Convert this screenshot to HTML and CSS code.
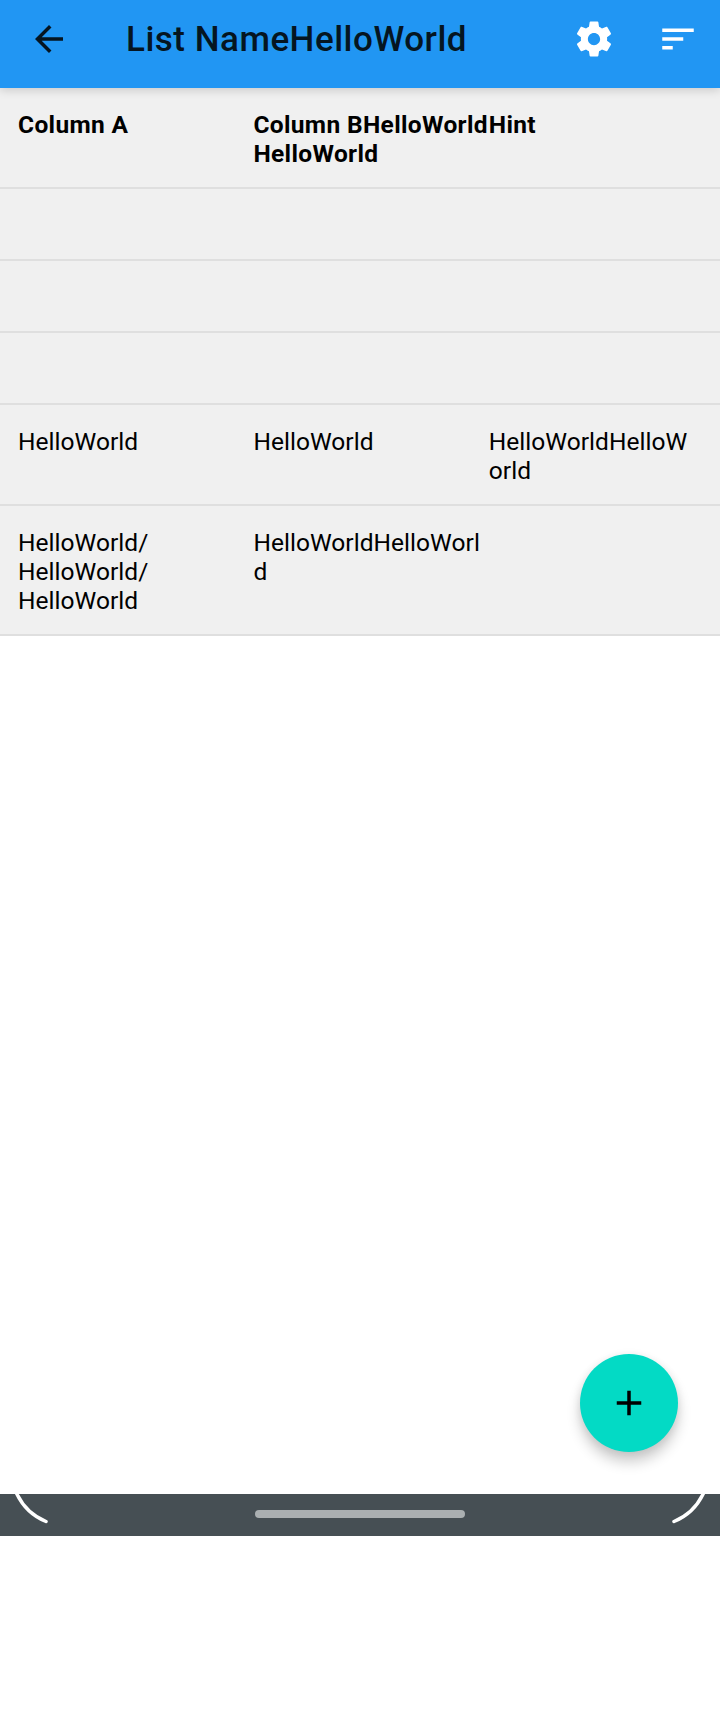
FILE: index.html
```html
<!DOCTYPE html>
<html lang="en">
<head>
<meta charset="utf-8">
<title>List Name</title>
<link rel="stylesheet" href="styles.css">
</head>
<body>
<div class="screen">
  <header class="toolbar">
    <svg class="icon" viewBox="0 0 24 24"><path fill="#051521" d="M20 11H7.83l5.59-5.59L12 4l-8 8 8 8 1.41-1.41L7.83 13H20v-2z"/></svg>
    <h1 class="title">List NameHelloWorld</h1>
    <svg class="icon" viewBox="0 0 24 24"><path fill="#fff" d="M19.43 12.98c.04-.32.07-.64.07-.98s-.03-.66-.07-.98l2.11-1.65c.19-.15.24-.42.12-.64l-2-3.46c-.12-.22-.39-.3-.61-.22l-2.49 1c-.52-.4-1.08-.73-1.69-.98l-.38-2.65C14.46 2.18 14.25 2 14 2h-4c-.25 0-.46.18-.49.42l-.38 2.65c-.61.25-1.17.59-1.69.98l-2.49-1c-.23-.09-.49 0-.61.22l-2 3.46c-.13.22-.07.49.12.64l2.11 1.65c-.04.32-.07.65-.07.98s.03.66.07.98l-2.11 1.65c-.19.15-.24.42-.12.64l2 3.46c.12.22.39.3.61.22l2.49-1c.52.4 1.08.73 1.69.98l.38 2.65c.03.24.24.42.49.42h4c.25 0 .46-.18.49-.42l.38-2.65c.61-.25 1.17-.59 1.69-.98l2.49 1c.23.09.49 0 .61-.22l2-3.46c.12-.22.07-.49-.12-.64l-2.11-1.65zM12 15.5c-1.93 0-3.5-1.57-3.5-3.5s1.57-3.5 3.5-3.5 3.5 1.57 3.5 3.5-1.57 3.5-3.5 3.5z"/></svg>
    <svg class="icon sort" viewBox="0 0 24 24"><path fill="#fff" d="M3 18h6v-2H3v2zM3 6v2h18V6H3zm0 7h12v-2H3v2z"/></svg>
  </header>
  <main class="content">
    <div class="table">
      <div class="row head"><div>Column A</div><div>Column BHelloWorld<br>HelloWorld</div><div>Hint</div></div>
      <div class="row"></div>
      <div class="row"></div>
      <div class="row"></div>
      <div class="row"><div>HelloWorld</div><div>HelloWorld</div><div>HelloWorldHelloW<br>orld</div></div>
      <div class="row"><div>HelloWorld/<br>HelloWorld/<br>HelloWorld</div><div>HelloWorldHelloWorl<br>d</div><div></div></div>
    </div>
    <button class="fab" aria-label="Add"><svg class="icon" viewBox="0 0 24 24"><path d="M19 13h-6v6h-2v-6H5v-2h6V5h2v6h6v2z"/></svg></button>
  </main>
  <footer class="navbar">
    <svg class="corner" viewBox="0 0 60 42"><path d="M15.5 -3Q25 19 46 27.5"/></svg>
    <div class="handle"></div>
    <svg class="corner flip" viewBox="0 0 60 42"><path d="M15.5 -3Q25 19 46 27.5"/></svg>
  </footer>
</div>
</body>
</html>
```
FILE: styles.css
```css
body {
  margin: 0;
  background: #fff;
  font-family: Roboto, "Liberation Sans", sans-serif;
  color: #000;
}
.screen {
  display: flex;
  flex-direction: column;
  height: 1536px;
}
.toolbar {
  display: flex;
  flex: none;
  box-sizing: border-box;
  height: 88px;
  padding: 18px 21px 0 28px;
  background: #2196f3;
  box-shadow: 0 2px 9px rgba(0, 0, 0, .17);
  z-index: 1;
}
.icon {
  display: block;
  flex: none;
  width: 42px;
  height: 42px;
}
.sort {
  margin-left: 42px;
}
.title {
  flex: 1;
  margin: 0 0 0 56px;
  font-size: 35px;
  font-weight: 500;
  line-height: 44px;
  letter-spacing: .5px;
  white-space: nowrap;
  color: #051521;
}
.content {
  display: flex;
  flex: 1;
  flex-direction: column;
  justify-content: space-between;
}
.row {
  display: grid;
  grid-template-columns: repeat(3, 235.4px);
  box-sizing: border-box;
  min-height: 72px;
  padding: 22px 0 19px 18px;
  border-bottom: 2px solid #dfdfdf;
  background: #f0f0f0;
  font-size: 24.5px;
  line-height: 29px;
  letter-spacing: .04px;
  white-space: nowrap;
}
.head {
  font-weight: 700;
  letter-spacing: .35px;
}
.fab {
  display: flex;
  align-items: center;
  justify-content: center;
  align-self: flex-end;
  width: 98px;
  height: 98px;
  margin: 0 42px 42px 0;
  padding: 0;
  border: 0;
  border-radius: 50%;
  background: #03dac5;
  box-shadow: 0 10px 14px rgba(0, 0, 0, .2), 0 1px 8px rgba(0, 0, 0, .08);
}
.navbar {
  display: flex;
  flex: none;
  align-items: flex-start;
  justify-content: space-between;
  height: 42px;
  background: #464f54;
}
.corner {
  width: 60px;
  height: 42px;
  fill: none;
  stroke: #fff;
  stroke-width: 3.5;
  stroke-linecap: round;
}
.flip {
  transform: scaleX(-1);
}
.handle {
  width: 210px;
  height: 8px;
  margin-top: 16px;
  border-radius: 4px;
  background: #aaafb1;
}
```
